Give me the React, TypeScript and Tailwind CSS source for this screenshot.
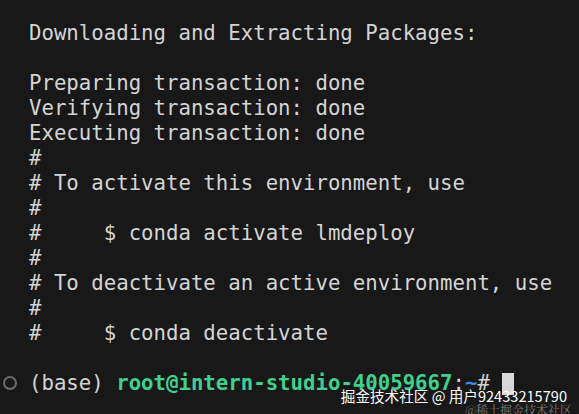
const LINES = [
  'Downloading and Extracting Packages:',
  '',
  'Preparing transaction: done',
  'Verifying transaction: done',
  'Executing transaction: done',
  '#',
  '# To activate this environment, use',
  '#',
  '#     $ conda activate lmdeploy',
  '#',
  '# To deactivate an active environment, use',
  '#',
  '#     $ conda deactivate',
  '',
]

export default function App() {
  return (
    <div className="relative w-[579px] h-[414px] overflow-hidden bg-[#181818] text-[#d4d4d4]">
      <div className="pt-[21px] pl-[29px] font-['DejaVu_Sans_Mono',monospace] text-[20.7px] leading-[25px] whitespace-pre">
        {LINES.map((line, i) => (
          <div key={i} className="h-[25px]">{line}</div>
        ))}
        <div className="relative h-[25px] flex items-center">
          <span className="absolute left-[-26px] top-[5px] w-[14px] h-[14px] rounded-full border-2 border-[#6b6b6b]" />
          <span>(base) </span>
          <span className="text-[#3fd08f] font-bold">root@intern-studio-40059667</span>
          <span>:</span>
          <span className="text-[#3b8eea] font-bold">~</span>
          <span># </span>
          <span className="inline-block w-[12px] h-[22px] bg-[#d8d8d8]" />
        </div>
      </div>

      {/* watermark */}
      <div className="absolute right-[12px] bottom-[10px] text-white text-[14.6px] leading-none font-['Noto_Sans_CJK_SC',sans-serif] whitespace-nowrap">
        掘金技术社区 @ 用户92433215790
      </div>
      <div className="absolute right-[7px] bottom-[-2px] text-[#7a7a7a] text-[12px] leading-none font-['Noto_Serif_CJK_SC','Noto_Sans_CJK_SC',serif] whitespace-nowrap">
        @稀土掘金技术社区
      </div>
    </div>
  )
}
